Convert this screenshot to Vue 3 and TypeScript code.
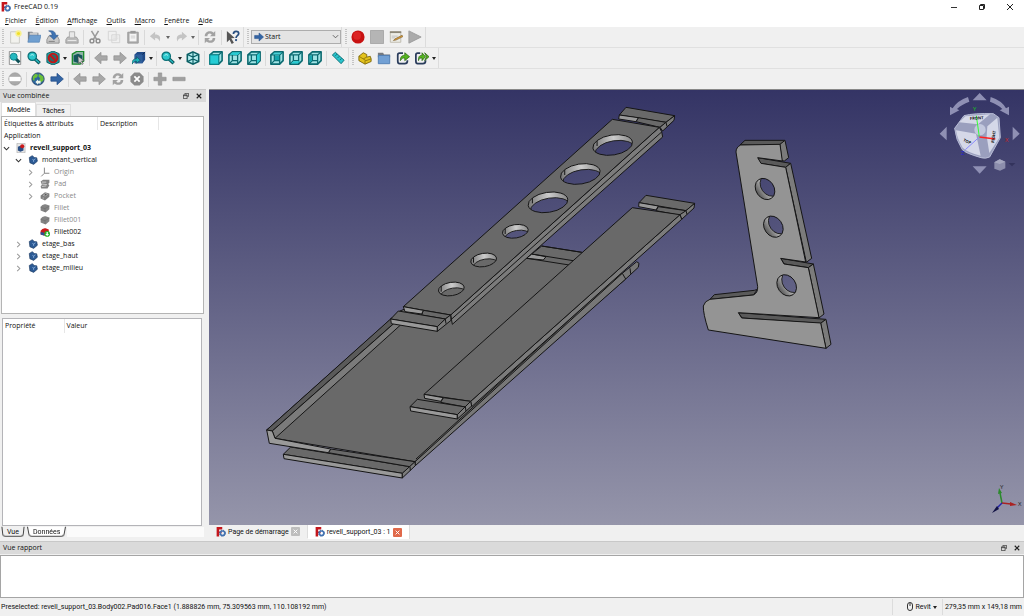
<script setup lang="ts">
import { ref } from 'vue'

interface Tool {
  icon?: string
  label?: string
  menu?: boolean
  sep?: boolean
}

interface TreeNode {
  label: string
  icon: string
  depth: number
  state?: 'open' | 'closed'
  muted?: boolean
  bold?: boolean
}

const t = (icon: string, label: string, menu = false): Tool => ({ icon, label, menu })
const sep: Tool = { sep: true }

const menus = [
  ['F', 'ichier'],
  ['É', 'dition'],
  ['A', 'ffichage'],
  ['O', 'utils'],
  ['M', 'acro'],
  ['F', 'enêtre'],
  ['A', 'ide'],
]

const fileTools: Tool[] = [
  t('new', 'Nouveau'), t('open', 'Ouvrir'), t('save', 'Enregistrer'), t('print', 'Imprimer'), sep,
  t('cut', 'Couper'), t('copy', 'Copier'), t('paste', 'Coller'), sep,
  t('undo', 'Annuler', true), t('redo', 'Rétablir', true), sep,
  t('refresh', 'Rafraîchir'), sep, t('whats', "Qu'est-ce que c'est ?"),
]
const macroTools: Tool[] = [
  t('record', 'Enregistrer la macro'), t('stop', 'Arrêter'), t('edit', 'Macros'), t('play', 'Exécuter'),
]
const viewTools: Tool[] = [
  t('fitall', 'Tout afficher'), t('zoom', 'Afficher la sélection'), t('style', 'Style de représentation', true),
  t('bbox', 'Boîte englobante'), sep,
  t('back', 'Précédent'), t('fwd', 'Suivant'), t('golink', 'Aller au lien', true), sep,
  t('zoom', 'Zoom', true), t('iso', 'Isométrique'), sep,
  t('front', 'Face'), t('top', 'Dessus'), t('right', 'Droite'), sep,
  t('rear', 'Arrière'), t('bottom', 'Dessous'), t('left', 'Gauche'), sep, t('measure', 'Mesurer'),
]
const structureTools: Tool[] = [
  t('part', 'Pièce'), t('group', 'Groupe'), t('link', 'Créer un lien'), t('links', 'Actions de lien', true),
]
const webTools: Tool[] = [
  t('noentry', 'Adresse'), sep, t('globe', 'Site web'), t('next', 'Page de démarrage'), sep,
  t('back', 'Page précédente'), t('fwd', 'Page suivante'), t('refresh', 'Actualiser'), t('cancel', 'Arrêter le chargement'), sep,
  t('plus', 'Agrandir'), t('minus', 'Réduire'),
]

const toolRows = [
  [fileTools, 'workbench', macroTools],
  [viewTools, structureTools],
  [webTools],
] as (Tool[] | string)[][]

const nodes: TreeNode[] = [
  { label: 'revell_support_03', icon: 'doc', depth: 0, state: 'open', bold: true },
  { label: 'montant_vertical', icon: 'body', depth: 1, state: 'open' },
  { label: 'Origin', icon: 'origin', depth: 2, state: 'closed', muted: true },
  { label: 'Pad', icon: 'pad', depth: 2, state: 'closed', muted: true },
  { label: 'Pocket', icon: 'pocket', depth: 2, state: 'closed', muted: true },
  { label: 'Fillet', icon: 'fillet', depth: 2, muted: true },
  { label: 'Fillet001', icon: 'fillet', depth: 2, muted: true },
  { label: 'Fillet002', icon: 'tip', depth: 2 },
  { label: 'etage_bas', icon: 'body', depth: 1, state: 'closed' },
  { label: 'etage_haut', icon: 'body', depth: 1, state: 'closed' },
  { label: 'etage_milieu', icon: 'body', depth: 1, state: 'closed' },
]

const strutHoles = [
  { x: 698, y: 150, rx: 60, ry: 30, dy: 18, plate: false },
  { x: 601, y: 237, rx: 60, ry: 30, dy: 18, plate: false },
  { x: 504, y: 322, rx: 60, ry: 30, dy: 18, plate: false },
  { x: 406, y: 409, rx: 39, ry: 20, dy: 18, plate: false },
  { x: 311, y: 495, rx: 39, ry: 20, dy: 18, plate: true },
  { x: 214, y: 582, rx: 39, ry: 20, dy: 18, plate: true },
]
const bracketHoles = [
  { x: 225, y: 177 },
  { x: 250, y: 290 },
  { x: 290, y: 466 },
]

const workbench = ref('Start')
</script>

<template>
  <div class="window">
    <svg class="sprite" aria-hidden="true">
      <defs>
        <linearGradient id="g-hole" x1="0" x2="1"><stop offset="0" stop-color="#777" /><stop offset=".55" stop-color="#ccc" /><stop offset="1" stop-color="#888" /></linearGradient>
        <linearGradient id="g-bore" x1="0" x2="1"><stop offset="0" stop-color="#555" /><stop offset=".5" stop-color="#aaa" /><stop offset="1" stop-color="#888" /></linearGradient>
        <linearGradient id="g-sky" gradientUnits="userSpaceOnUse" x1="0" y1="90" x2="0" y2="525"><stop offset="0" stop-color="#343465" /><stop offset="1" stop-color="#9595aa" /></linearGradient>
        <linearGradient id="g-sky-shelf" gradientUnits="userSpaceOnUse" x1="0" y1="-15" x2="0" y2="1290"><stop offset="0" stop-color="#343465" /><stop offset="1" stop-color="#9595aa" /></linearGradient>
        <linearGradient id="g-sky-bracket" gradientUnits="userSpaceOnUse" x1="0" y1="-120" x2="0" y2="1185"><stop offset="0" stop-color="#343465" /><stop offset="1" stop-color="#9595aa" /></linearGradient>
      </defs>
      <symbol id="i-logo" viewBox="0 0 16 16">
        <path d="M1 0h9v4H5v3h4v3H5v5H1z" fill="#c4161c" />
        <circle cx="10.500" cy="10" r="3.500" fill="none" stroke="#4575b5" stroke-width="2.400" />
        <circle cx="10.500" cy="10" r="4.800" fill="none" stroke="#37659f" stroke-width="1.600" stroke-dasharray="2 1.770" />
      </symbol>
      <symbol id="i-new" viewBox="0 0 16 16"><path d="M3 2h10v13H3z" fill="#f2f2ee" stroke="#c6c6c0" /><circle cx="12" cy="4" r="3.600" fill="#f7ef8d" /><circle cx="12" cy="4" r="1.800" fill="#f1df28" /></symbol>
      <symbol id="i-open" viewBox="0 0 16 16"><path d="M1 2h5l1 1h6v4H3L1 14z" fill="#777e86" /><path d="M3 3h9v4H3z" fill="#ccc" /><path d="M3 6h13l-2 8H1z" fill="#6f9fd0" stroke="#4c7bb0" stroke-width=".7" /></symbol>
      <symbol id="i-save" viewBox="0 0 16 16"><path d="M3 7h10l2 4v4H1v-4z" fill="#c9c9c9" stroke="#8c8c8c" /><path d="M3 13h7" stroke="#777" /><path d="M3 1c5-1 8 1 8 5h3l-5 5-5-5h3c0-2-1-4-4-5z" fill="#3e73b3" stroke="#244f86" stroke-width=".6" /></symbol>
      <symbol id="i-print" viewBox="0 0 16 16"><path d="M3 8h10l2 3v4H1v-4z" fill="#bbb" stroke="#999" /><path d="M5 2h6v7H5z" fill="#e8e8e8" stroke="#aaa" /><path d="M3 12h10" stroke="#eee" /></symbol>
      <symbol id="i-cut" viewBox="0 0 16 16"><path d="M4 1l6 10M12 1L6 11" stroke="#9b9b9b" stroke-width="1.800" fill="none" /><circle cx="4.500" cy="12.500" r="2.200" fill="none" stroke="#8c8c8c" stroke-width="1.600" /><circle cx="11.500" cy="12.500" r="2.200" fill="none" stroke="#8c8c8c" stroke-width="1.600" /></symbol>
      <symbol id="i-copy" viewBox="0 0 16 16"><path d="M1.500 1.500h9v10h-9zM5.500 5.500h9v9h-9z" fill="#f0f0f0" stroke="#d2d2d2" /><path d="M7 8h6M7 10h6M7 12h4" stroke="#ddd" /></symbol>
      <symbol id="i-paste" viewBox="0 0 16 16"><path d="M2 2.500h12v12.500H2z" fill="#aaa" stroke="#999" /><path d="M4 4h8v9H4z" fill="#f4f4f4" /><path d="M5 1h6v3H5z" fill="#999" /><path d="M5.500 7h5M5.500 9h5" stroke="#ccc" /></symbol>
      <symbol id="i-undo" viewBox="0 0 16 16"><path d="M1 7l6-5v3c5 0 7 3 5 8-1-3-2-4-5-4v3z" fill="#c4c4c4" /></symbol>
      <symbol id="i-redo" viewBox="0 0 16 16"><path d="M15 7L9 2v3C4 5 2 8 4 13c1-3 2-4 5-4v3z" fill="#c4c4c4" /></symbol>
      <symbol id="i-refresh" viewBox="0 0 16 16"><path d="M2 7c0-6 7-7 10-4l2-2v6H8l2-2C8 3 5 4 5 7zM14 9c0 6-7 7-10 4l-2 2V9h6l-2 2c2 2 5 1 5-2z" fill="#a2a2a2" /></symbol>
      <symbol id="i-whats" viewBox="0 0 16 16"><path d="M1 1l9 8-4 .5 3 5-2.500 1.500-2.500-5L1 14z" fill="#555" /><path d="M8.500 4.500c0-4 6-4 6-.5 0 2.500-3 2.500-3 5" fill="none" stroke="#294f80" stroke-width="2" /><circle cx="11.500" cy="11.500" r="1.300" fill="#294f80" /></symbol>
      <symbol id="i-record" viewBox="0 0 16 16"><circle cx="8" cy="8" r="7.500" fill="#c81212" /><circle cx="7" cy="6.500" r="4.500" fill="#dc2424" /></symbol>
      <symbol id="i-stop" viewBox="0 0 16 16"><path d="M.5.5h15v15H.5z" fill="#b5b5b5" stroke="#a3a3a3" /></symbol>
      <symbol id="i-edit" viewBox="0 0 16 16"><path d="M1.500 2h12v12h-12z" fill="#ecece6" stroke="#bbb7aa" /><path d="M1 1.500h13v2H1z" fill="#8c8778" /><path d="M3 7h7M3 9h4" stroke="#bbb" /><path d="M15 6l-8 4-2 2 3-.5 8-4z" fill="#d89c38" stroke="#6a4a20" stroke-width=".6" /></symbol>
      <symbol id="i-play" viewBox="0 0 16 16"><path d="M1 1l14 7-14 7z" fill="#ababab" stroke="#9a9a9a" /></symbol>
      <symbol id="i-fitall" viewBox="0 0 16 16"><path d="M1.500.5h13v15h-13z" fill="#f8f8f8" stroke="#888" /><path d="M8 8l5 5" stroke="#0d4f55" stroke-width="3.500" /><circle cx="6.500" cy="6.500" r="4" fill="#25b8c0" stroke="#0b7f86" stroke-width="1" /></symbol>
      <symbol id="i-zoom" viewBox="0 0 16 16"><path d="M8 8l6.500 6" stroke="#0d5257" stroke-width="4" /><path d="M9 9l5 4.500" stroke="#25b8c0" stroke-width="1.600" /><circle cx="6" cy="6" r="4.800" fill="#2cc7cc" stroke="#0b6f76" stroke-width="1.400" /><path d="M4 5q2-2 4 0" stroke="#c4f5f5" fill="none" /></symbol>
      <symbol id="i-style" viewBox="0 0 16 16"><path d="M8 0l7 3v10l-7 3-7-3V3z" fill="#1ba0a5" stroke="#0c5a5e" /><circle cx="8" cy="8" r="5" fill="#366" stroke="#c71414" stroke-width="2.200" /><path d="M4.500 4.500l7 7" stroke="#c71414" stroke-width="2.200" /></symbol>
      <symbol id="i-bbox" viewBox="0 0 16 16"><path d="M1.500 3.500l5-3h8v11l-4 3.500h-9z" fill="#8fb3a5" stroke="#1a8a2c" stroke-width="1.500" /><path d="M3 5l5-2 5 2v6l-4 3-6-2z" fill="#15575c" /><path d="M8 6l7 5-3 .5 2 3-1.500 1-2-3-2 2z" fill="#ccc" stroke="#444" stroke-width=".6" /></symbol>
      <symbol id="i-back" viewBox="0 0 16 16"><path d="M.7 8L8 1.500V5.500h7v5H8v4z" fill="#a8a8a8" stroke="#8f8f8f" stroke-width=".8" /></symbol>
      <symbol id="i-fwd" viewBox="0 0 16 16"><path d="M15.300 8L8 1.500V5.500H1v5h7v4z" fill="#a8a8a8" stroke="#8f8f8f" stroke-width=".8" /></symbol>
      <symbol id="i-next" viewBox="0 0 16 16"><path d="M15.300 8L8 1.500V5.500H1v5h7v4z" fill="#3465a4" stroke="#204a87" stroke-width=".8" /></symbol>
      <symbol id="i-golink" viewBox="0 0 16 16"><path d="M3 4l3-3h9v9l-3 4H3z" fill="#204a87" /><path d="M3 4h9v10H3z" fill="#2f5f9d" /><path d="M12 4l3-3" stroke="#102a50" /><path d="M0 15c0-5 2-6 5-6V6.500l4.500 4L5 14v-2.500c-2 0-3 1-5 3.500z" fill="#1eb1bb" stroke="#0b4d55" stroke-width=".7" /></symbol>
      <symbol id="i-iso" viewBox="0 0 16 16"><path d="M8 1l6.500 3v8L8 15l-6.500-3V4z" fill="#b5eef0" stroke="#0b6065" stroke-width="1.800" /><path d="M1.500 4L8 7l6.500-3M8 7v8M8 1v5M1.500 12L8 9l6.500 3" stroke="#0b6065" stroke-width="1.400" fill="none" /></symbol>
      <symbol id="i-cube" viewBox="0 0 16 16"><path d="M1 4.500L5 1h10v10l-4 4H1z" fill="#9fe3e5" stroke="#0b6a70" stroke-width="1.800" stroke-linejoin="round" /><path d="M1 4.500h10V15M11 4.500L15 1M5 4.500V11h6M5 11l-4 4" fill="none" stroke="#0b6a70" stroke-width="1.500" /></symbol>
      <symbol id="i-front" viewBox="0 0 16 16"><use href="#i-cube" /><path d="M1 4.500h10V15H1z" fill="#26ccd4" stroke="#0b8a90" /></symbol>
      <symbol id="i-top" viewBox="0 0 16 16"><use href="#i-cube" /><path d="M2 4.300L5 1.500h9.500l-3.500 3z" fill="#26ccd4" /></symbol>
      <symbol id="i-right" viewBox="0 0 16 16"><use href="#i-cube" /><path d="M11.500 4.700l3-3V11l-3 3.200z" fill="#26ccd4" /></symbol>
      <symbol id="i-rear" viewBox="0 0 16 16"><use href="#i-cube" /><path d="M5.500 5.200h5V10.500h-5z" fill="#13a5ad" /><path d="M5 1.800h9L11 4H3z" fill="#26ccd4" opacity=".7" /></symbol>
      <symbol id="i-bottom" viewBox="0 0 16 16"><use href="#i-cube" /><path d="M2 14.300L5 11.700h8l-3 2.600z" fill="#26ccd4" /></symbol>
      <symbol id="i-left" viewBox="0 0 16 16"><use href="#i-cube" /><path d="M1.800 5.200h2.700V11l-2.700 2.500z" fill="#13a5ad" /></symbol>
      <symbol id="i-measure" viewBox="0 0 16 16"><path d="M1.500 4.500L5 1.500l10 9-3.500 4z" fill="#29c3cc" stroke="#0b6970" /><path d="M7 3.500l-2 2M9.500 6l-2 2M12 8.500l-2 2" stroke="#0b6970" /></symbol>
      <symbol id="i-part" viewBox="0 0 16 16"><path d="M1 6l5-4 4 2v3l4-1 1 3v3l-7 3-7-4z" fill="#e3c21c" stroke="#7a6508" /><path d="M1 6l5 3 4-2M6 9l3 2 6-2M8 11v4" stroke="#8d760a" fill="none" /></symbol>
      <symbol id="i-group" viewBox="0 0 16 16"><path d="M1 2h6l1 2h7v3H1z" fill="#76797e" /><path d="M1.500 5h13v9.500h-13z" fill="#72a0d4" stroke="#4d7bb2" /></symbol>
      <symbol id="i-link" viewBox="0 0 16 16"><path d="M8 2.500H4q-2 0-2 2v7q0 3 2 3h6q3 0 3-3v-1" fill="none" stroke="#2b3d5c" stroke-width="2" /><path d="M5 11c0-5 2-6 5-6V2l5.500 4.500L10 11V8c-2 0-3 0-5 3z" fill="#55b51f" stroke="#26620e" stroke-width=".8" /></symbol>
      <symbol id="i-links" viewBox="0 0 16 16"><path d="M6 2.500H3q-2 0-2 2v7q0 3 2 3h6q3 0 3-3v-1" fill="none" stroke="#2b3d5c" stroke-width="2" /><path d="M4 11c0-5 1-6 4-6V2l4 4.500L8 11V8c-2 0-3 0-4 3zM11 2l5 4.500-5 4.500 2-4.500z" fill="#55b51f" stroke="#26620e" stroke-width=".8" /></symbol>
      <symbol id="i-noentry" viewBox="0 0 16 16"><circle cx="8" cy="8" r="7" fill="#aaa" stroke="#999" /><path d="M1.500 5.500h13v5h-13z" fill="#fff" /></symbol>
      <symbol id="i-globe" viewBox="0 0 16 16"><circle cx="8" cy="8" r="7" fill="#2d659e" stroke="#1c3c62" /><path d="M2 5l3-3 3 1-1 3-3 1v3l-2-1zM9 2l5 3 .5 4-3 3-2-3 1-2-2-2z" fill="#6cc038" /><path d="M5 11.500l3-3v1.500h3v3H8v1.500z" fill="#eef6ea" /></symbol>
      <symbol id="i-cancel" viewBox="0 0 16 16"><path d="M5 .5h6L15.500 5v6L11 15.500H5L.5 11V5z" fill="#8b8b8b" /><path d="M5 5l6 6M11 5l-6 6" stroke="#fff" stroke-width="2" /></symbol>
      <symbol id="i-plus" viewBox="0 0 16 16"><path d="M6 1h4v5h5v4h-5v5H6v-5H1V6h5z" fill="#a0a0a0" stroke="#8f8f8f" stroke-width=".7" /></symbol>
      <symbol id="i-minus" viewBox="0 0 16 16"><path d="M1 6h14v4H1z" fill="#a0a0a0" stroke="#8f8f8f" stroke-width=".7" /></symbol>
      <symbol id="i-doc" viewBox="0 0 16 16"><path d="M1.500.5h13v15h-13z" fill="#e6e6e6" stroke="#aaa" /><path d="M3 6l5-2 4 2v6l-5 2-4-2z" fill="#2a4f85" /><circle cx="10" cy="5" r="3.200" fill="#cc1a1a" /></symbol>
      <symbol id="i-body" viewBox="0 0 16 16"><path d="M2 4l5-3 3 3 4 .5 1 5.500-6 5-6-2.500z" fill="#2c5a94" stroke="#1a3860" /><path d="M7 7l2 1 3-2M9 8v3" stroke="#8fb4e0" fill="none" stroke-width="1.300" /></symbol>
      <symbol id="i-origin" viewBox="0 0 16 16"><path d="M7 1v9h8M7 10l-5 5" stroke="#888" stroke-width="1.600" fill="none" /></symbol>
      <symbol id="i-pad" viewBox="0 0 16 16"><path d="M1 4l4-3h10v5l-2 2 2 2-3 5H2l-1-3 2-3z" fill="#838383" /><path d="M3 5h7M3 8l8 1M3 12l7-1" stroke="#ddd" stroke-width="1.300" /></symbol>
      <symbol id="i-pocket" viewBox="0 0 16 16"><path d="M1 7l7-5 7 2v5l-7 6-7-3z" fill="#7e7e7e" /><path d="M5 7l4-3 3 1-3 3zM5 10v3" stroke="#ccc" fill="#555" /></symbol>
      <symbol id="i-fillet" viewBox="0 0 16 16"><path d="M1 6q3-5 8-4l6 2v6l-6 5-8-3z" fill="#848484" /><path d="M1 7l7 2 7-4M8 9v5" stroke="#6d6d6d" fill="none" /></symbol>
      <symbol id="i-tip" viewBox="0 0 16 16"><path d="M1 6q3-5 8-4l5 2v5l-6 5-7-2z" fill="#c91b1b" /><path d="M1 8l6 1v5l-6-2z" fill="#2a4f95" /><circle cx="11.500" cy="11" r="4.500" fill="#27b52a" /><path d="M10.500 8h2v3h2l-3 3.500-3-3.500h2z" fill="#fff" /></symbol>
      <symbol id="i-restore" viewBox="0 0 8 8"><path d="M2.500 2V.5h5v4H6M.5 2.500h5v5h-5zM.5 3.500h5" fill="none" stroke="#333" /></symbol>
      <symbol id="i-x" viewBox="0 0 8 8"><path d="M1 1l6 6M7 1L1 7" stroke="currentColor" stroke-width="1.500" fill="none" /></symbol>
    </svg>

    <header class="titlebar">
      <svg class="ico10"><use href="#i-logo" /></svg>
      <h1>FreeCAD 0.19</h1>
      <div class="winbtns">
        <button aria-label="Réduire"><svg viewBox="0 0 8 8"><path d="M1 4.500h6" stroke="#333" /></svg></button>
        <button aria-label="Restaurer"><svg viewBox="0 0 8 8"><path d="M2.500 2V1.500h4v4H6M1.500 2.500h4v4h-4z" fill="none" stroke="#222" /></svg></button>
        <button aria-label="Fermer"><svg viewBox="0 0 8 8"><path d="M1 1l6 6M7 1L1 7" stroke="#222" fill="none" /></svg></button>
      </div>
    </header>

    <nav class="menubar">
      <button v-for="m in menus" :key="m[0] + m[1]"><u>{{ m[0] }}</u>{{ m[1] }}</button>
    </nav>

    <div class="toolrows">
      <div v-for="(row, r) in toolRows" :key="r" class="toolrow">
        <template v-for="(bar, b) in row" :key="b">
          <div v-if="typeof bar === 'string'" class="toolbar">
            <span class="handle"></span>
            <label class="workbench">
              <svg class="wbicon"><use href="#i-next" /></svg>
              <select v-model="workbench" aria-label="Atelier"><option>Start</option></select>
              <svg class="chev" viewBox="0 0 8 8"><path d="M1 2.500l3 3 3-3" fill="none" stroke="#555" /></svg>
            </label>
          </div>
          <div v-else class="toolbar">
            <span class="handle"></span>
            <template v-for="(tool, i) in bar" :key="i">
              <span v-if="tool.sep" class="sep"></span>
              <button v-else class="tool" :class="{ drop: tool.menu }" :aria-label="tool.label">
                <svg><use :href="'#i-' + tool.icon" /></svg>
                <i v-if="tool.menu" :class="{ dim: tool.icon === 'undo' || tool.icon === 'redo' }"></i>
              </button>
            </template>
          </div>
        </template>
      </div>
    </div>

    <main class="work">
      <aside class="dock">
        <div class="docktitle">
          <h2>Vue combinée</h2>
          <button aria-label="Détacher"><svg><use href="#i-restore" /></svg></button>
          <button aria-label="Fermer le panneau"><svg><use href="#i-x" /></svg></button>
        </div>
        <div class="toptabs">
          <button class="on">Modèle</button>
          <button>Tâches</button>
        </div>
        <section class="tree">
          <div class="treehead"><span>Étiquettes &amp; attributs</span><span>Description</span></div>
          <div class="row app">Application</div>
          <div v-for="n in nodes" :key="n.label" class="row" :class="['d' + n.depth, { muted: n.muted, bold: n.bold }]">
            <button v-if="n.state" class="exp" :aria-label="'Déplier ' + n.label">
              <svg viewBox="0 0 8 8"><path :d="n.state === 'open' ? 'M1 2.500l3 3 3-3' : 'M2.500 1l3 3-3 3'" fill="none" :stroke="n.state === 'open' ? '#333' : '#999'" stroke-width="1.200" /></svg>
            </button>
            <span v-else class="exp"></span>
            <svg class="ico10"><use :href="'#i-' + n.icon" /></svg>
            <span>{{ n.label }}</span>
          </div>
        </section>
        <section class="props">
          <table>
            <thead><tr><th>Propriété</th><th>Valeur</th></tr></thead>
          </table>
        </section>
        <div class="bottabs">
          <button>Vue</button>
          <button class="on">Données</button>
          <span></span>
        </div>
      </aside>

      <section class="mdi">
        <svg class="scene" viewBox="209 90 815 435" preserveAspectRatio="xMidYMid slice" role="img" aria-label="Vue 3D">
          <rect x="0" y="80" width="1300" height="455" fill="url(#g-sky)" />
          <g class="solid">
            <!-- lower shelf -->
            <path class="f" d="M266.700 430L400 311 526.700 258 541.700 246l40 6.300L620 275l2-2 3.700 6L415 461.700 275 438.300z" />
            <path class="s" d="M415 461.700L622.300 273.300l14.400-11.600 2.300 1.600-.7 4L625.700 279 415.300 465.700z" />
            <path class="n" d="M416 459L624 270M630 268.300l.7 5.500M622.300 273.300l3.400 5.700" />
            <path class="l" d="M526.700 258.300l5-4.300 14.300 2.700-2.700 3.300z" />
            <path class="n" d="M541.700 246l40 6.300M531.700 254l41.600 6.700M526.700 258.300l42.600 6.700" />
            <path class="d" d="M266.700 430L391.700 318l6 2L272.300 431z" />
            <path class="m" d="M272.300 431L395 322.500l5.500 2.500L275 438.300z" />
            <path class="f" d="M290.700 447L410 466.700l-7.700 6.600-119-19z" />
            <path class="l" d="M283.300 454.300l119 19v4.700L284 458.700z" />
            <path class="f" d="M330.700 449l84.300 12.700-5 5-81.700-14z" />
            <path class="l" d="M266.700 430l5.600 1 2.700 7.300 55.700 10.700-2.400 3.700-59-9.400z" />
            <path class="m" d="M402.300 473.300l12.700-11.600.3 4L402.300 478zM410 466.700l.3 3.800" />
          </g>
          <g class="solid" transform="translate(400 180) scale(.333333)">
            <!-- middle shelf -->
            <path class="f" d="M738 46l146 24-26 22-141-24z" />
            <path class="f" d="M775 80l83 12-18 14-72-14z" />
            <path class="l" d="M717 68l-1 12 52 10 7-12z" />
            <path class="m" d="M884 70l-2 14-37 34-5-14 18-12zM858 92l3 11" />
            <path class="m" d="M840 104l5 14-630 562-3-16z" />
            <path class="f" d="M697 83l143 21-628 560-140-21z" />
            <path class="f" d="M130 653l82 11-16 17-74-14z" />
            <path class="l" d="M72 643l2 12 48 9 8-11z" />
            <path class="f" d="M52 658l144 23-24 23-142-24z" />
            <path class="l" d="M30 680l142 24v13L32 693z" />
            <path class="m" d="M172 704l40-40 3 14-43 39zM196 681l2 12" />
          </g>
          <g class="solid" transform="translate(380 95) scale(.333333)">
            <!-- upper shelf -->
            <path class="f" d="M738 37l146 25-26 20-140-22z" />
            <path class="f" d="M775 68l83 14-18 15-72-17z" />
            <path class="l" d="M718 60l-2 12 52 8 7-12z" />
            <path class="m" d="M884 62l-2 14-34 32-8-11 18-15zM858 82l3 12" />
            <path class="m" d="M838 97l7 13 3 16-631 562-5-28z" />
            <path class="n" d="M845 111L214 673" />
            <path class="f" d="M697 73l141 24-626 563-142-25z" />
            <path class="f" d="M130 646l82 14-16 12-71-12z" />
            <path class="l" d="M70 635l5 15 50 7 5-11z" />
            <path class="f" d="M55 648l141 24-24 23-140-23z" />
            <path class="l" d="M32 672l140 23v14L34 686z" />
            <path class="m" d="M172 695l24-23 16-12 1 16-41 33zM196 672l2 14" />
            <g v-for="(h, i) in strutHoles" :key="i">
              <clipPath :id="'sh' + i"><ellipse :cx="h.x" :cy="h.y" :rx="h.rx" :ry="h.ry" :transform="`rotate(-9 ${h.x} ${h.y})`" /></clipPath>
              <ellipse :cx="h.x" :cy="h.y" :rx="h.rx" :ry="h.ry" fill="url(#g-hole)" :transform="`rotate(-9 ${h.x} ${h.y})`" />
              <g :clip-path="`url(#sh${i})`">
                <ellipse class="through" :fill="h.plate ? '#696969' : 'url(#g-sky-shelf)'" :cx="h.x + 4" :cy="h.y + h.dy" :rx="h.rx" :ry="h.ry" :transform="`rotate(-9 ${h.x} ${h.y})`" />
                <path class="n" :d="`M${h.x - h.rx * 0.78} ${h.y - h.ry * 0.5}v${h.dy}`" />
              </g>
              <ellipse class="n" :cx="h.x" :cy="h.y" :rx="h.rx" :ry="h.ry" :transform="`rotate(-9 ${h.x} ${h.y})`" />
            </g>
          </g>
          <g class="solid" transform="translate(690 130) scale(.333333)">
            <!-- upright bracket -->
            <path class="d" d="M150 45l15-14h120l-15 13z" />
            <path class="d" d="M60 508l13-14 120-13 10-3-13 17z" />
            <path class="m" d="M270 43l15-12 11 52-13 10-8-1z" />
            <path class="d" d="M203 83l99 17-15 12-76-12z" />
            <path class="m" d="M287 112l15-12 63 285-16 12z" />
            <path class="d" d="M272 385l98 17-15 11-72-11z" />
            <path class="m" d="M355 413l15-11 32 150-15 12z" />
            <path class="d" d="M145 548l263 20-16 12-236-16z" />
            <path class="m" d="M392 580l16-12 15 75-15 12z" />
            <path class="p" d="M138 66q0-14 14-21l118-2 7 50-74-10 10 17 74 12 60 284-75-11 10 17 73 11 32 150-242-15 10 16 237 15 16 76-353-55q-16-50-15-72 4-15 20-20l130-13q14-6 13-25z" />
            <g v-for="(h, i) in bracketHoles" :key="i">
              <clipPath :id="'bh' + i"><ellipse :cx="h.x" :cy="h.y" rx="27" ry="34" :transform="`rotate(-35 ${h.x} ${h.y})`" /></clipPath>
              <ellipse :cx="h.x" :cy="h.y" rx="27" ry="34" fill="url(#g-bore)" :transform="`rotate(-35 ${h.x} ${h.y})`" />
              <g :clip-path="`url(#bh${i})`" ><ellipse class="through" fill="url(#g-sky-bracket)" :cx="h.x + 18" :cy="h.y" rx="27" ry="34" :transform="`rotate(-35 ${h.x} ${h.y})`" /></g>
              <ellipse class="n" :cx="h.x" :cy="h.y" rx="27" ry="34" :transform="`rotate(-35 ${h.x} ${h.y})`" />
            </g>
          </g>
          <g transform="translate(900 85) scale(.333333)">
            <!-- navigation cube -->
            <g fill="#8f90b4">
              <path d="M218 46l21-22 21 22zM218 244h42l-21 22zM119 146l21-21v41zM359 146l-21-21v41z" />
              <path d="M204 36q-32 11-46 34l-8-5v26l28-15-7-4q14-14 37-22zM272 36q34 11 46 34l9-5v26l-28-15 8-4q-14-14-37-22z" />
            </g>
            <path d="M164 130l28-38q30-8 88-6l17 12 4 60-32 58q-12 6-26 2-48-14-56-24-20-30-23-64z" fill="#9a9fbe" stroke="#b9bdd6" stroke-width="3" />
            <path d="M178 112l18-18 74-6-36 30z" fill="#d5d8e8" />
            <path d="M168 136l60 10 14 66q-40-10-54-24-16-26-20-52z" fill="#d5d8e8" />
            <path d="M262 124l30-26 6 60-30 46-8-50z" fill="#d5d8e8" />
            <circle cx="240" cy="134" r="17" fill="#c3c8de" />
            <path d="M238 156L229 92" stroke="#3f3" stroke-width="3" />
            <path d="M238 156l48 6" stroke="#f22" stroke-width="4" />
            <path d="M238 156l-42 38" stroke="#88f" stroke-width="3" />
            <path d="M283 232l16-9 17 7v20l-16 7-17-6z" fill="#8c8eac" /><path d="M283 232l16 5 17-7-17-7z" fill="#a6a8c0" />
            <path d="M326 234h20l-10 10z" fill="#33335c" />
          </g>
          <g class="cubetext">
            <text x="970" y="120" transform="rotate(-4 970 120)">FRONT</text>
            <text x="994" y="143" transform="rotate(-82 994 143)">RIGHT</text>
            <text x="963" y="141" transform="rotate(25 963 141)">TOP</text>
          </g>
          <g class="axes">
            <text x="973" y="111" fill="#1c1">Y</text>
            <text x="1005" y="142" fill="#c22">X</text>
            <text x="961" y="155" fill="#22d">Z</text>
            <text x="1000" y="489" fill="#222">Y</text>
            <text x="1018" y="506" fill="#222">X</text>
          </g>
          <path d="M1002 503l-2-10" stroke="#2b8a2b" stroke-width="1.500" /><path d="M998 494l1-6 3 5z" fill="#2b8a2b" />
          <path d="M1002 503l9 1" stroke="#a22" stroke-width="1.500" /><path d="M1010 502l7 3-7 1z" fill="#a22" />
          <path d="M1002 503l-5 5" stroke="#22a" stroke-width="1.500" /><path d="M997 506l2 3-7 4z" fill="#114" />
        </svg>
        <div class="mditabs">
          <div class="mditab"><svg class="ico10"><use href="#i-logo" /></svg><button>Page de démarrage</button><button class="cl" aria-label="Fermer Page de démarrage"><svg><use href="#i-x" /></svg></button></div>
          <div class="mditab on"><svg class="ico10"><use href="#i-logo" /></svg><button>revell_support_03 : 1</button><button class="cl" aria-label="Fermer revell_support_03"><svg><use href="#i-x" /></svg></button></div>
        </div>
      </section>
    </main>

    <section class="report">
      <div class="docktitle">
        <h2>Vue rapport</h2>
        <button aria-label="Détacher le rapport"><svg><use href="#i-restore" /></svg></button>
        <button aria-label="Fermer le rapport"><svg><use href="#i-x" /></svg></button>
      </div>
      <textarea readonly aria-label="Vue rapport"></textarea>
    </section>

    <footer class="status">
      <span class="msg">Preselected: revell_support_03.Body002.Pad016.Face1 (1.888826 mm, 75.309563 mm, 110.108192 mm)</span>
      <button class="nav">
        <svg viewBox="0 0 8 10"><rect x="1.500" y=".5" width="5" height="8" rx="2.500" fill="none" stroke="#333" /><path d="M4 1v3" stroke="#333" /></svg>
        Revit<i></i>
      </button>
      <span class="dim">279,35 mm x 149,18 mm</span>
    </footer>
  </div>
</template>

<style>
body { margin: 0; background: #f0f0f0; overflow: hidden; }
</style>

<style scoped>
.window { display: flex; flex-direction: column; height: 100vh; background: #f0f0f0; color: #111; font: 7px/12px "Open Sans", "Noto Sans", sans-serif; }
.window *, .window *::before { box-sizing: border-box; }
.sprite { position: absolute; width: 0; height: 0; }
button { font: inherit; color: inherit; background: none; border: 0; padding: 0; margin: 0; }
h1, h2 { font: inherit; margin: 0; }
svg { display: block; flex: none; }
.ico10 { width: 10px; height: 10px; }

.titlebar { display: flex; align-items: center; height: 14px; padding-left: 1px; background: #fff; gap: 3px; }
.winbtns { display: flex; margin-left: auto; }
.winbtns button { width: 28px; height: 12px; display: flex; align-items: center; justify-content: center; }
.winbtns svg { width: 8px; height: 8px; }

.menubar { display: flex; gap: 9px; height: 13px; padding-left: 5px; background: #fff; }
.menubar u { text-underline-offset: 1px; }

.toolrow { display: flex; height: 21px; border-bottom: 1px solid #e0e0e0; }
.toolrow:last-child { height: 20px; border-bottom: 0; }
.toolrow:last-child .toolbar { border-right: 0; }
.toolbar { display: flex; align-items: center; border-right: 1px solid #dcdcdc; }
.toolbar + .toolbar { padding-left: 1px; }
.handle { width: 2px; height: 16px; margin: 0 2px; background: repeating-linear-gradient(#c4c4c4 0 1px, transparent 1px 2px); }
.sep { width: 1px; height: 15px; margin: 0 2px 0 1px; background: #d9d9d9; }
.tool { display: flex; align-items: center; width: 19px; height: 19px; padding-left: 2px; }
.tool svg { width: 14px; height: 14px; }
.tool.drop { width: 25px; gap: 3px; }
i { width: 0; height: 0; border: 2px solid transparent; border-top: 3px solid #222; border-bottom: 0; }
i.dim { border-top-color: #666; }
.workbench { position: relative; width: 90px; height: 16px; }
.workbench select { appearance: none; width: 100%; height: 14px; margin-top: 1px; padding: 0 0 0 13px; border: 1px solid #adadad; border-radius: 0; background: #e4e4e4; font: inherit; color: inherit; }
.wbicon { position: absolute; left: 3px; top: 3px; width: 10px; height: 10px; }
.chev { position: absolute; right: 2px; top: 4px; width: 7px; height: 7px; }

.work { display: flex; flex: 1; min-height: 0; gap: 3px; }
.dock { width: 206px; display: flex; flex-direction: column; }
.docktitle { display: flex; align-items: center; height: 13px; padding: 0 1px 0 3px; background: #dadada; border-top: 1px solid #c8c8c8; }
.docktitle h2 { flex: 1; }
.docktitle button { width: 13px; height: 11px; display: flex; align-items: center; justify-content: center; color: #222; }
.docktitle svg { width: 6px; height: 6px; }
.toptabs { display: flex; height: 14px; padding-left: 1px; align-items: flex-end; }
.toptabs button { height: 12px; padding: 0 5px; border: 1px solid #dedede; border-bottom: 0; }
.toptabs .on { height: 14px; background: #fff; }
.toptabs, .bottabs, .mditabs, .status { font-family: Roboto, "Open Sans", sans-serif; }
.tree { flex: 198; margin: 0 2px 0 1px; border: 1px solid #b4b4b4; background: #fff; }
.treehead { display: flex; height: 13px; line-height: 14px; }
.treehead span { padding-left: 2px; border-right: 1px solid #e6e6e6; }
.treehead span:first-child { width: 96px; }
.treehead span:last-child { width: 61px; }
.row { display: flex; align-items: center; height: 12px; gap: 4px; white-space: nowrap; }
.row.app { padding-left: 2px; }
.d0 { padding-left: 1px; }
.d1 { padding-left: 13px; }
.d2 { padding-left: 25px; }
.exp { width: 9px; height: 8px; }
.exp svg { width: 7px; height: 7px; }
.muted { color: #8a8a8a; }
.bold { font-weight: 700; }
.props { flex: 208; margin: 4px 4px 0 2px; border: 1px solid #b4b4b8; background: #fff; }
.props table { width: 100%; border-collapse: collapse; }
.props th { font-weight: 400; text-align: left; padding: 0 0 0 2px; height: 14px; }
.props th:first-child { width: 61px; border-right: 1px solid #e6e6e6; }
.bottabs { display: flex; height: 13px; padding: 1px 2px 2px 0; margin-bottom: 2px; gap: 0; }
.bottabs button { position: relative; padding: 0 7px; line-height: 10px; }
.bottabs button::before { content: ""; position: absolute; inset: 0 2px; border: 1px solid #444; border-top: 0; border-radius: 0 0 3px 3px; transform: perspective(20px) rotateX(-12deg); }
.bottabs .on::before { background: #fff; z-index: -1; }
.bottabs .on { z-index: 0; }
.bottabs span { flex: 1; background: #fbfbfb; }

.mdi { flex: 1; min-width: 0; display: flex; flex-direction: column; border-top: 1px solid #888; }
.scene { width: 100%; flex: 1; min-height: 0; }
.mditabs { display: flex; height: 16px; align-items: flex-start; }
.mditab { display: flex; align-items: center; height: 13px; padding: 0 7px; gap: 2px; border-right: 1px solid #ddd; }
.mditab.on { height: 14px; background: #fff; }
.cl { width: 9px; height: 9px; display: flex; align-items: center; justify-content: center; background: #bdbdbd; color: #fff; border-radius: 1px; }
.on .cl { background: #e0694a; }
.cl svg { width: 5px; height: 5px; }
.solid path, .n { stroke: #151515; stroke-width: 1; stroke-linejoin: round; vector-effect: non-scaling-stroke; }
.f { fill: #696969; }
.m { fill: #7b7b7b; }
.s { fill: #777; }
.l { fill: #999; }
.d { fill: #5a5a5a; }
.p { fill: #949494; }
.n, .solid path.n { fill: none; }
.through { stroke: #222; stroke-width: 1; vector-effect: non-scaling-stroke; }
.cubetext { font-size: 4px; font-weight: 700; fill: #111; }
.axes { font-size: 6px; }

.report { display: flex; flex-direction: column; height: 57px; }
.report textarea { flex: 1; margin: 1px 0 0; padding: 2px; border: 1px solid #a5a5a5; background: #fff; resize: none; font: inherit; border-radius: 0; }
.status { display: flex; align-items: center; height: 18px; white-space: nowrap; }
.msg { flex: 1; padding-left: 1px; }
.nav { display: flex; align-items: center; gap: 2px; padding: 0 5px 0 13px; height: 16px; border: solid #dcdcdc; border-width: 0 1px; }
.nav svg { width: 8px; height: 10px; }
span.dim { padding: 0 2px; }
</style>
